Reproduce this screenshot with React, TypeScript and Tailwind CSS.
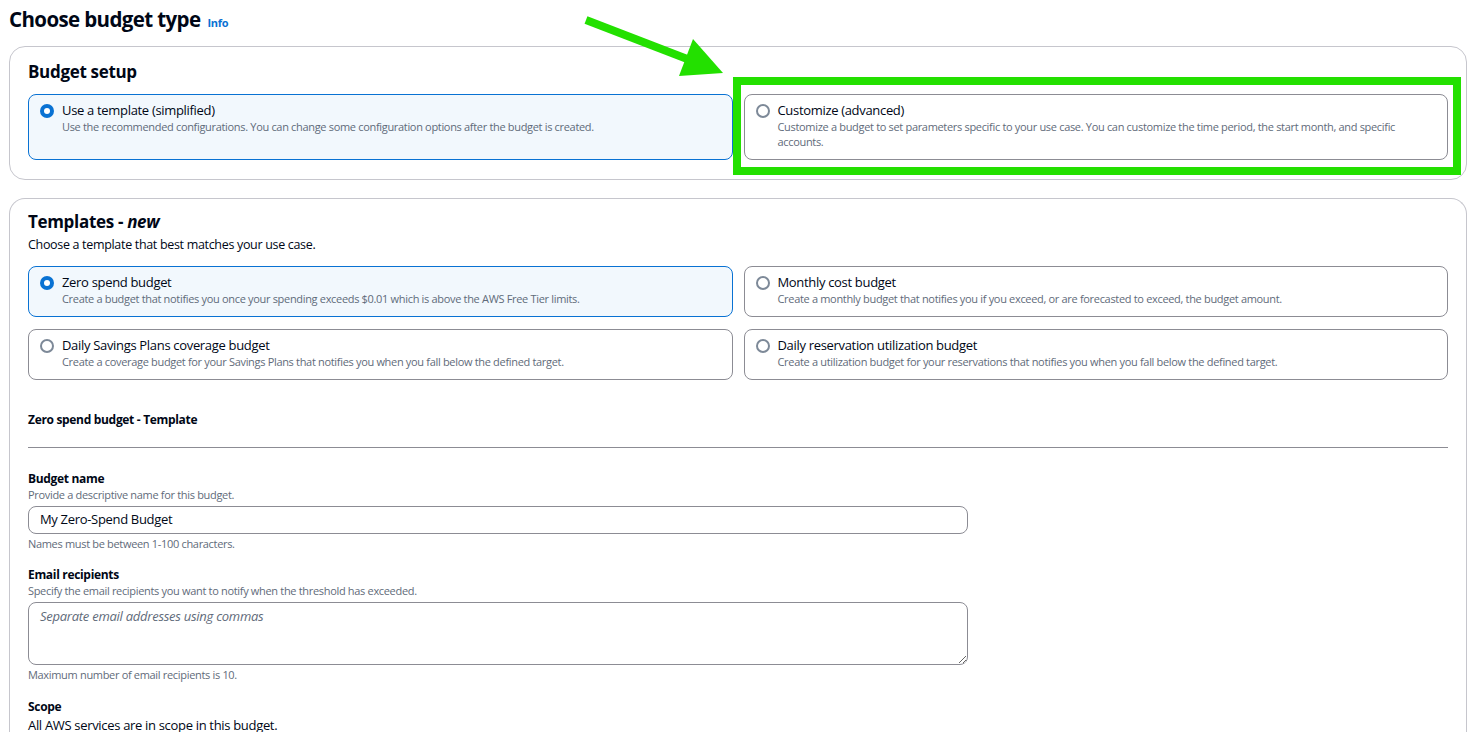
import React from 'react';

type Option = { title: string; desc: string; selected?: boolean };

const setupOptions: Option[] = [
  {
    title: 'Use a template (simplified)',
    desc: 'Use the recommended configurations. You can change some configuration options after the budget is created.',
    selected: true,
  },
  {
    title: 'Customize (advanced)',
    desc: 'Customize a budget to set parameters specific to your use case. You can customize the time period, the start month, and specific accounts.',
  },
];

const templateOptions: Option[] = [
  {
    title: 'Zero spend budget',
    desc: 'Create a budget that notifies you once your spending exceeds $0.01 which is above the AWS Free Tier limits.',
    selected: true,
  },
  {
    title: 'Monthly cost budget',
    desc: 'Create a monthly budget that notifies you if you exceed, or are forecasted to exceed, the budget amount.',
  },
  {
    title: 'Daily Savings Plans coverage budget',
    desc: 'Create a coverage budget for your Savings Plans that notifies you when you fall below the defined target.',
  },
  {
    title: 'Daily reservation utilization budget',
    desc: 'Create a utilization budget for your reservations that notifies you when you fall below the defined target.',
  },
];

function Radio({ checked }: { checked?: boolean }) {
  return checked ? (
    <span className="mt-[2px] flex h-[14px] w-[14px] shrink-0 items-center justify-center rounded-full bg-[#0972d3]">
      <span className="h-[6px] w-[6px] rounded-full bg-white" />
    </span>
  ) : (
    <span className="mt-[2px] h-[14px] w-[14px] shrink-0 rounded-full border-2 border-[#7d8998] bg-white" />
  );
}

function Tile({ opt, className }: { opt: Option; className: string }) {
  return (
    <div
      className={
        'flex gap-[8px] rounded-[8px] border pl-[11px] pr-[16px] pt-[7px] ' +
        className +
        (opt.selected ? ' border-[#0972d3] bg-[#f2f8fd]' : ' border-[#8c8c94] bg-white')
      }
    >
      <Radio checked={opt.selected} />
      <div>
        <div className="text-[13px] leading-[17px] text-[#000716]">{opt.title}</div>
        <div className="text-[11px] leading-[15px] text-[#5f6b7a]">{opt.desc}</div>
      </div>
    </div>
  );
}

function Field({ label, desc, hint, children }: { label: string; desc: string; hint: string; children: React.ReactNode }) {
  return (
    <div className="w-[940px]">
      <div className="text-[12px] font-bold leading-[16px] text-[#000716]">{label}</div>
      <div className="text-[11px] leading-[15px] text-[#5f6b7a]">{desc}</div>
      <div className="mt-[4px]">{children}</div>
      <div className="mt-[2px] text-[11px] leading-[15px] text-[#5f6b7a]">{hint}</div>
    </div>
  );
}

export default function App() {
  return (
    <div
      className="relative min-h-screen overflow-hidden bg-white pl-[9px] pr-[12px] pt-[6px] tracking-[-0.02em] text-[#000716]"
      style={{ fontFamily: '"Open Sans", "Noto Sans", Arial, sans-serif' }}
    >
      <div className="flex items-baseline gap-[7px]">
        <h1 className="text-[20.5px] font-bold leading-[26px] tracking-[-0.03em]">Choose budget type</h1>
        <span className="text-[11px] font-bold text-[#0972d3]">Info</span>
      </div>

      {/* Budget setup */}
      <div className="mt-[14px] rounded-[16px] border border-[#c6c6cd] px-[18px] pb-[19px] pt-[14px]">
        <h2 className="text-[17px] font-bold leading-[22px]">Budget setup</h2>
        <div className="mt-[11px] grid grid-cols-2 gap-[11px]">
          {setupOptions.map((o) => (
            <Tile key={o.title} opt={o} className="h-[66px]" />
          ))}
        </div>
      </div>

      {/* Templates */}
      <div className="mt-[18px] rounded-t-[16px] border border-b-0 border-[#c6c6cd] px-[18px] pb-[20px] pt-[12px]">
        <h2 className="text-[17px] font-bold leading-[22px]">
          Templates - <em>new</em>
        </h2>
        <p className="mt-[3px] text-[12.5px] leading-[18px] text-[#000716]">Choose a template that best matches your use case.</p>
        <div className="mt-[12px] grid grid-cols-2 gap-x-[11px] gap-y-[12px]">
          {templateOptions.map((o) => (
            <Tile key={o.title} opt={o} className="h-[51px]" />
          ))}
        </div>

        <div className="mt-[32px] text-[12px] font-bold leading-[16px]">Zero spend budget - Template</div>
        <div className="mt-[19px] h-px bg-[#8c8c94]" />

        <div className="mt-[23px] flex flex-col gap-[16px]">
          <Field label="Budget name" desc="Provide a descriptive name for this budget." hint="Names must be between 1-100 characters.">
            <div className="flex h-[28px] items-center rounded-[8px] border border-[#8c8c94] px-[11px] text-[13px] text-[#000716]">
              My Zero-Spend Budget
            </div>
          </Field>
          <Field
            label="Email recipients"
            desc="Specify the email recipients you want to notify when the threshold has exceeded."
            hint="Maximum number of email recipients is 10."
          >
            <textarea
              className="block h-[63px] w-full rounded-[8px] border border-[#8c8c94] px-[11px] py-[4px] text-[13px] italic tracking-[-0.02em] placeholder:text-[#5f6b7a]"
              placeholder="Separate email addresses using commas"
            />
          </Field>
          <div className="mt-[1px]">
            <div className="text-[12px] font-bold leading-[16px]">Scope</div>
            <div className="mt-[1px] text-[13px] leading-[18px]">All AWS services are in scope in this budget.</div>
          </div>
        </div>
      </div>

      {/* Annotation overlay */}
      <div className="pointer-events-none absolute left-[733px] top-[77px] h-[98px] w-[728px] border-[8px] border-[#23e000]" />
      <svg className="pointer-events-none absolute left-0 top-0" width="1479" height="732">
        <line x1="586" y1="20" x2="695" y2="62" stroke="#23e000" strokeWidth="8" />
        <polygon points="723,73 693,39 679,76" fill="#23e000" />
      </svg>
    </div>
  );
}
